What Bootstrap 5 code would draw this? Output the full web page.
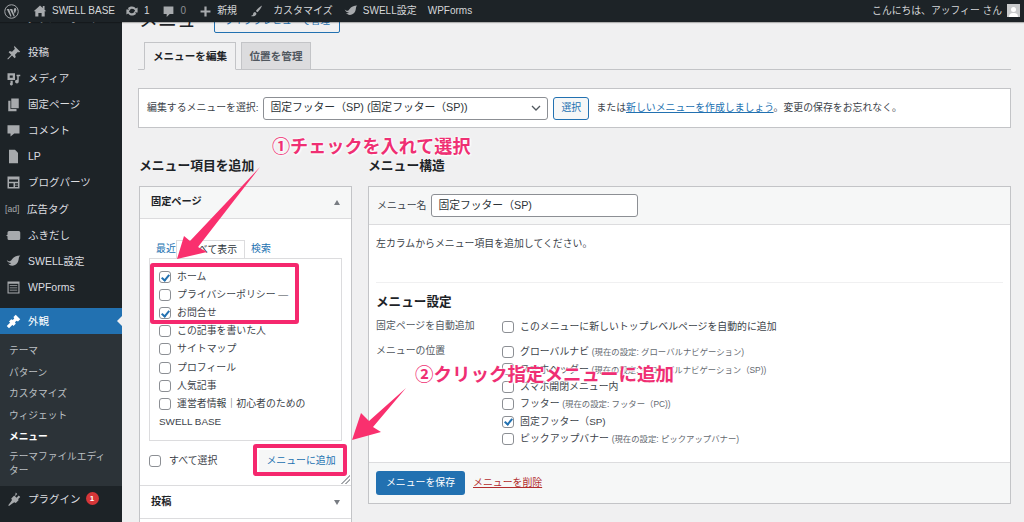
<!DOCTYPE html>
<html lang="ja"><head><meta charset="utf-8"><title>メニュー</title>
<link href="https://cdn.jsdelivr.net/npm/bootstrap@5.3.0/dist/css/bootstrap.min.css" rel="stylesheet">
<style>
html,body{height:522px;overflow:hidden}
body{font-family:"Liberation Sans","Noto Sans CJK JP",sans-serif;font-size:9.9px;color:#3c434a;background:#f0f0f1;line-height:1.4}
a{color:#2271b1}
svg{display:block;flex:none}
.stage{position:relative;width:1024px;height:522px;overflow:hidden}
.abar{height:22px;background:#1d2327;color:#d5d7d9;font-size:10px;position:relative;z-index:3;box-shadow:0 1px 1px #0004;padding:0 4px}
.abar svg{fill:#a7aaad}
.abitem{display:flex;align-items:center;gap:5px}
.abm1{margin-right:14px}.abm2{margin-right:10px}.abm3{margin-right:13px}.abm4{margin-right:14px}.abm5{margin-right:13px}.abm6{margin-right:11px}.abm7{margin-right:11px}
.g6{gap:6px}.g7{gap:7px}.g10{gap:10px}
.abgrey{color:#8c8f94}
.abnote{font-size:9.8px}
.shell{height:500px}
.side{width:122px;background:#1d2327;color:#dcdee0;font-size:10.5px;overflow:hidden;flex:none}
.side svg{fill:#a7aaad}
.sitem{height:26px;display:flex;align-items:center;padding-left:6px;gap:7px;flex:none}
.sitem svg{width:15px;height:15px}
.sclip{height:17px;flex:none;padding-left:27px;display:flow-root}
.sclip span{display:block;margin-top:-12px;line-height:16px}
.s2{margin-top:1px}
.adtag{width:15px;color:#a7aaad;font-size:8.6px;white-space:nowrap;margin-left:-1px}
.sactive{background:#2271b1;color:#fff;margin-top:8px;position:relative}
.side .sactive svg{fill:#fff}
.sactive::after{content:"";position:absolute;right:0;top:8px;border:5px solid transparent;border-right-color:#f0f0f1;border-left:0}
.ssub{background:#2c3338;color:#bcc0c4;font-size:9.7px;padding:6px 9px 6px}
.ssub div{height:21.6px;display:flex;align-items:center}
.ssub .scur{color:#fff;font-weight:700}
.ssub .swrap{height:auto;display:block;line-height:14px;padding:2px 0}
.main{flex:1;padding:0 13px 0 16px;overflow:hidden;min-width:0}
.ttl{margin:-7px 0 0 0;height:21px;gap:16px}
.ttl h1{font-size:19px;font-weight:400;color:#1d2327;margin:-5px 0 0 1px;line-height:21px;width:59px;white-space:nowrap}
.prev{border:1px solid #2271b1;border-radius:2px;color:#2271b1;font-size:9.7px;width:126px;height:24px;margin-top:-6px;display:flex;align-items:center;justify-content:center}
.tabrow{border-bottom:1px solid #c3c4c7;height:33px;padding-left:6px;gap:5px;margin-top:1px;align-items:flex-end}
.wtab{height:28px;border:1px solid #c3c4c7;display:flex;align-items:center;justify-content:center;font-weight:700;font-size:10.6px;margin-bottom:-1px;background:#dcdcde;color:#50575e}
.wtab.on{background:#f0f0f1;color:#1d2327;border-bottom-color:#f0f0f1}
.tw1{width:92px}.tw2{width:70px}
.selbox{margin-top:18px;height:40px;background:#fff;border:1px solid #c3c4c7;padding:0 8px;gap:5px}
.fake{border:1px solid #8c8f94;border-radius:3px;background:#fff;color:#2c3338;height:23px;display:flex;align-items:center;padding:0 6px;font-size:10.8px}
.fsel{width:285px;justify-content:space-between}
.bsel{width:36px;height:23px;border:1px solid #2271b1;border-radius:3px;background:#f6f7f7;color:#2271b1;display:flex;align-items:center;justify-content:center}
.seltxt{margin-left:2px}
.cols{margin-top:28px;gap:15px;align-items:flex-start}
.lcol{width:215px;flex:none}
.rcol{flex:1;min-width:0}
.colh{font-size:12.8px;font-weight:700;color:#1d2327;height:20px;line-height:20px;margin:0 0 10px 1px}
.colr{margin-left:0}
.lpanel{margin:0 1px;background:#fff;border:1px solid #c3c4c7;height:340px}
.phead{height:32px;padding:0 11px;font-weight:700;color:#1d2327;font-size:10.2px;border-bottom:1px solid #dcdcde;background:#f6f7f7}
.caret{width:0;height:0;border-left:3.5px solid transparent;border-right:3.5px solid transparent}
.cup{border-bottom:5px solid #787c82}
.cdn{border-top:5px solid #787c82}
.ptabs{height:39px;padding:0 16px;align-items:flex-end}
.ptabs span{height:19px;display:flex;align-items:center}
.ptabs a{text-decoration:none;height:19px;display:flex;align-items:center}
.ptabs .pon{border:1px solid #dcdcde;border-bottom-color:#fff;margin:0 6px -1px 0;padding:0 7px 0 12px;color:#2c3338}
.pbox{margin:0 9px;height:183px;border:1px solid #dcdcde;padding:9px 9px 0;position:relative}
.cbrow{height:18.1px;display:flex;align-items:center;gap:6px;color:#3c434a;white-space:nowrap}
.cbx{width:12px;height:12px;border:1px solid #8c8f94;border-radius:3px;background:#fff;flex:none;position:relative;display:block}
.cbx.chk::after{content:"";position:absolute;left:3px;top:.5px;width:5px;height:8px;border:solid #2271b1;border-width:0 2px 2px 0;transform:rotate(40deg)}
.pfoot{height:44px;padding:0 9px 4px;position:relative}
.addb{color:#2271b1;background:#f6f7f7;width:84px;height:22px;display:flex;align-items:center;justify-content:center;margin-right:-1px}
.grip{position:absolute;right:1px;bottom:1px;width:9px;height:9px;background:linear-gradient(135deg,transparent 50%,#a7aaad 50%,#a7aaad 58%,transparent 58%,transparent 72%,#a7aaad 72%,#a7aaad 80%,transparent 80%)}
.psec{height:33px;padding:0 11px;font-weight:700;color:#1d2327;font-size:10.2px;border-top:1px solid #dcdcde}
.rpanel{background:#fff;border:1px solid #c3c4c7;height:318px}
.rhead{height:38px;padding:0 8px;background:#f6f7f7;border-bottom:1px solid #dcdcde;gap:5px}
.finp{width:207px;height:23px}
.rbody{padding:11px 7px 0}
.rbody p{margin:0;height:47px;border-bottom:1px solid #f0f0f1;line-height:16px}
.rbody h3{font-size:12.6px;font-weight:700;color:#1d2327;margin:10px 0 7px;line-height:18px}
.setr{display:flex}
.set1{margin-bottom:8px}
.setl{width:126px;flex:none;color:#50575e;line-height:16px}
.setv .cbrow{height:17.4px}
.setv small{font-size:8.4px;color:#646970}
.rfoot{border-top:1px solid #dcdcde;height:41px;padding:0 7px;gap:8px;background:#f6f7f7}
.savb{width:89px;height:24px;border-radius:3px;background:#2271b1;color:#fff;display:flex;align-items:center;justify-content:center}
.delb{color:#b32d2e;text-decoration:underline}
.anno{position:absolute;font-weight:700;line-height:22px;color:#ef2f73;white-space:nowrap;z-index:5;text-shadow:0 0 2px #fff,0 0 3px #fff,1px 1px 2px #fff}
.a1{left:272px;top:136px;font-size:18.1px}
.a2{left:415px;top:364px;font-size:18.5px}
.hl{position:absolute;border:4px solid #f5286e;border-radius:3px;z-index:4}
.h1box{left:150px;top:263px;width:149px;height:61px}
.h2box{left:253px;top:444px;width:94px;height:32px}
.arrows{position:absolute;left:0;top:0;z-index:4}
.ubadge{width:13px;height:13px;border-radius:50%;background:#d63638;color:#fff;font-size:8px;font-weight:700;display:flex;align-items:center;justify-content:center;margin-left:-2px}
.avatar{width:13px;height:13px;background:#c9cbcd;position:relative;overflow:hidden;margin-left:5px}
.avatar::before{content:"";position:absolute;left:4px;top:3px;width:5px;height:5px;border-radius:50%;background:#fff}
.avatar::after{content:"";position:absolute;left:2px;top:9px;width:9px;height:6px;border-radius:4px 4px 0 0;background:#fff}
</style></head><body>
<div class="stage">
<div class="abar d-flex align-items-center justify-content-between">
 <div class="d-flex align-items-center">
  <div class="abitem abm1"><svg width="15" height="15" viewBox="0 0 20 20"><circle cx="10" cy="10" r="9" fill="none" stroke="#a7aaad" stroke-width="1.3"/><path d="M3.600 6.800h3.200L10 16.200 8.800 17zM7.600 6.800h3.400l3.400 9.400-1.200.8zM13.300 6.500c1-2 3-1 3.100 1l-2 5.500-1.500-4z"/></svg></div>
  <div class="abitem abm2"><svg width="14" height="14" viewBox="0 0 20 20"><path d="M10 2l4 3.800V3h2.500v5.200L19 10.500h-2.300V18h-4.400v-5H7.700v5H3.300v-7.500H1z"/></svg><span>SWELL BASE</span></div>
  <div class="abitem abm3"><svg width="14" height="14" viewBox="0 0 20 20"><path d="M10 3.500c2.300 0 4.300 1.200 5.500 3L18 5v7h-6l2.500-2.200C13.700 8 12 6.800 10 6.800c-1.300 0-2.500.5-3.400 1.400L4 6C5.500 4.400 7.600 3.500 10 3.500zM10 16.500c-2.300 0-4.300-1.200-5.500-3L2 15V8h6l-2.500 2.200C6.300 12 8 13.200 10 13.200c1.300 0 2.500-.5 3.400-1.400L16 14c-1.500 1.600-3.600 2.500-6 2.500z"/></svg><span>1</span></div>
  <div class="abitem abm4 g7"><svg width="11" height="13" viewBox="0 0 18 20"><path d="M1 2h16v12h-6l-5 5v-5H1z"/></svg><span class="abgrey">0</span></div>
  <div class="abitem abm5 g6"><svg width="11" height="11" viewBox="0 0 20 20"><path d="M8 1h4v7h7v4h-7v7H8v-7H1V8h7z"/></svg><span>新規</span></div>
  <div class="abitem abm6 g10"><svg width="13" height="14" viewBox="0 0 20 20"><path d="M18.500 1.500c-3 1.500-7 5-9.500 8.500l2.500 2c3-3 6-7 7-10.500zM8 11.500c-2.500.2-3 2-3.300 3.500-.2 1-1.200 2-3.200 2.500 3 1 8 .5 8.500-3.500z"/></svg><span>カスタマイズ</span></div>
  <div class="abitem abm7"><svg width="14" height="12" viewBox="0 0 20 16"><path d="M1 6c3 3 5 2 7-1 2-3 6-5 11-5-3 2-1 6-4 10-3 4-9 5-12 1 2 .5 3 0 4-1C4 10 2 9 1 6z"/></svg><span>SWELL設定</span></div>
  <div class="abitem"><span>WPForms</span></div>
 </div>
 <div class="d-flex align-items-center abnote"><span>こんにちは、アッフィー さん</span><span class="avatar"></span></div>
</div>
<div class="shell d-flex">
 <nav class="side d-flex flex-column">
  <div class="sclip"><span>ダッシュボード</span></div>
  <div class="sitem"><svg viewBox="0 0 20 20"><path d="M11 1l8 8-2 1-1-1-4 4 1 3-1.500 1.500-3.500-3.500L3 19H2v-1l5-5-3.500-3.500L5 8l3 1 4-4-1-1z"/></svg><span>投稿</span></div>
  <div class="sitem"><svg viewBox="0 0 20 20"><path fill-rule="evenodd" d="M2 3h10v9H2zM5 6v3h4V6z"/><path d="M14 5h5v2h-2v7a2.500 2.500 0 1 1-2-2.400V7h-1zM6 13h3v3.500a2 2 0 1 1-3-.800z"/></svg><span>メディア</span></div>
  <div class="sitem"><svg viewBox="0 0 20 20"><path d="M7 2h10v13H7zM3 5h3v11h8v3H3z"/></svg><span>固定ページ</span></div>
  <div class="sitem"><svg viewBox="0 0 20 20"><path d="M2 3h16v11h-7l-5 4v-4H2z"/></svg><span>コメント</span></div>
  <div class="sitem"><svg viewBox="0 0 20 20"><path d="M4 1h8l4 4v14H4z"/></svg><span>LP</span></div>
  <div class="sitem"><svg viewBox="0 0 20 20"><path fill-rule="evenodd" d="M2 2h16v16H2zM4 6v3h12V6zM4 11v5h6v-5zM12 11v2h4v-2zM12 14v2h4v-2z"/></svg><span>ブログパーツ</span></div>
  <div class="sitem s2"><span class="adtag">[ad]</span><span>広告タグ</span></div>
  <div class="sitem"><svg viewBox="0 0 20 20"><path d="M4 4h13a2 2 0 0 1 2 2v8a2 2 0 0 1-2 2H4a2 2 0 0 1-2-2v-3l-2-1 2-1V6a2 2 0 0 1 2-2z"/></svg><span>ふきだし</span></div>
  <div class="sitem"><svg viewBox="0 0 20 16"><path d="M1 6c3 3 5 2 7-1 2-3 6-5 11-5-3 2-1 6-4 10-3 4-9 5-12 1 2 .5 3 0 4-1C4 10 2 9 1 6z"/></svg><span>SWELL設定</span></div>
  <div class="sitem"><svg viewBox="0 0 20 20"><path fill-rule="evenodd" d="M2 2h16v16H2zM3.500 5v11.500h13V5zM5 7h10v1H5zM5 10h10v1H5zM5 13h10v1H5z"/></svg><span>WPForms</span></div>
  <div class="sitem sactive"><svg viewBox="0 0 20 20"><path d="M13 1l6 6-3 3-2-1-2 2 1 2-3 3-6-6 3-3 2 1 2-2-1-2zM6 11l3 3-5 5-3-3z"/></svg><span>外観</span></div>
  <div class="ssub">
   <div>テーマ</div><div>パターン</div><div>カスタマイズ</div><div>ウィジェット</div><div class="scur">メニュー</div><div class="swrap">テーマファイルエディター</div>
  </div>
  <div class="sitem"><svg viewBox="0 0 20 20"><path d="M13 2l2 2-3 3 2 2 3-3 2 2-3 3 1 1-4 4-2-1-3 2-4 3-1-1 3-4 2-3-1-2 4-4 1 1z"/></svg><span>プラグイン</span><span class="ubadge">1</span></div>
 </nav>
 <main class="main">
  <div class="ttl d-flex"><h1>メニュー</h1><div class="prev">ライブプレビューで管理</div></div>
  <div class="tabrow d-flex"><div class="wtab on tw1">メニューを編集</div><div class="wtab tw2">位置を管理</div></div>
  <div class="selbox d-flex align-items-center">
   <span>編集するメニューを選択:</span>
   <div class="fake fsel"><span>固定フッター（SP) (固定フッター（SP))</span><svg width="10" height="6" viewBox="0 0 10 6"><path d="M1 1l4 4 4-4" fill="none" stroke="#50575e" stroke-width="1.300"/></svg></div>
   <div class="bsel">選択</div>
   <span class="seltxt">または<a href="#">新しいメニューを作成しましょう</a>。変更の保存をお忘れなく。</span>
  </div>
  <div class="cols d-flex">
   <section class="lcol">
    <div class="colh">メニュー項目を追加</div>
    <div class="lpanel">
     <div class="phead d-flex align-items-center justify-content-between"><span>固定ページ</span><i class="caret cup"></i></div>
     <div class="ptabs d-flex"><a href="#">最近</a><span class="pon">すべて表示</span><a href="#">検索</a></div>
     <div class="pbox">
      <div class="cbrow"><i class="cbx chk"></i>ホーム</div>
      <div class="cbrow"><i class="cbx"></i>プライバシーポリシー —</div>
      <div class="cbrow"><i class="cbx chk"></i>お問合せ</div>
      <div class="cbrow"><i class="cbx"></i>この記事を書いた人</div>
      <div class="cbrow"><i class="cbx"></i>サイトマップ</div>
      <div class="cbrow"><i class="cbx"></i>プロフィール</div>
      <div class="cbrow"><i class="cbx"></i>人気記事</div>
      <div class="cbrow"><i class="cbx"></i>運営者情報｜初心者のための</div>
      <div class="cbrow">SWELL BASE</div>
     </div>
     <div class="pfoot d-flex align-items-center justify-content-between"><span class="d-flex align-items-center gap-2"><i class="cbx"></i>すべて選択</span><span class="addb">メニューに追加</span><i class="grip"></i></div>
     <div class="psec d-flex align-items-center justify-content-between"><span>投稿</span><i class="caret cdn"></i></div>
     <div class="psec"></div>
    </div>
   </section>
   <section class="rcol">
    <div class="colh colr">メニュー構造</div>
    <div class="rpanel d-flex flex-column">
     <div class="rhead d-flex align-items-center"><span>メニュー名</span><div class="fake finp">固定フッター（SP)</div></div>
     <div class="rbody">
      <p>左カラムからメニュー項目を追加してください。</p>
      <h3>メニュー設定</h3>
      <div class="setr set1"><div class="setl">固定ページを自動追加</div><div class="setv"><div class="cbrow"><i class="cbx"></i>このメニューに新しいトップレベルページを自動的に追加</div></div></div>
      <div class="setr"><div class="setl">メニューの位置</div><div class="setv">
       <div class="cbrow"><i class="cbx"></i><span>グローバルナビ <small>(現在の設定: グローバルナビゲーション)</small></span></div>
       <div class="cbrow"><i class="cbx"></i><span>スマホヘッダー <small>(現在の設定: グローバルナビゲーション（SP))</small></span></div>
       <div class="cbrow"><i class="cbx"></i><span>スマホ開閉メニュー内</span></div>
       <div class="cbrow"><i class="cbx"></i><span>フッター <small>(現在の設定: フッター（PC))</small></span></div>
       <div class="cbrow"><i class="cbx chk"></i><span>固定フッター（SP)</span></div>
       <div class="cbrow"><i class="cbx"></i><span>ピックアップバナー <small>(現在の設定: ピックアップバナー)</small></span></div>
      </div></div>
     </div>
     <div class="rfoot d-flex align-items-center mt-auto"><span class="savb">メニューを保存</span><a class="delb" href="#">メニューを削除</a></div>
    </div>
   </section>
  </div>
 </main>
</div>
<div class="hl h1box"></div><div class="hl h2box"></div>
<svg class="arrows" width="1024" height="522" viewBox="0 0 1024 522"><path fill="#f9306e" d="M260 167L190 241 184 236 177 259 207 252 198 247z"/><path fill="#f9306e" d="M406 388L369 421 361 413 352 440 381 432 373 427z"/></svg>
<div class="anno a1">①チェックを入れて選択</div>
<div class="anno a2">②クリック指定メニューに追加</div>
</div>
<script src="https://cdn.jsdelivr.net/npm/bootstrap@5.3.0/dist/js/bootstrap.bundle.min.js"></script>
</body></html>
